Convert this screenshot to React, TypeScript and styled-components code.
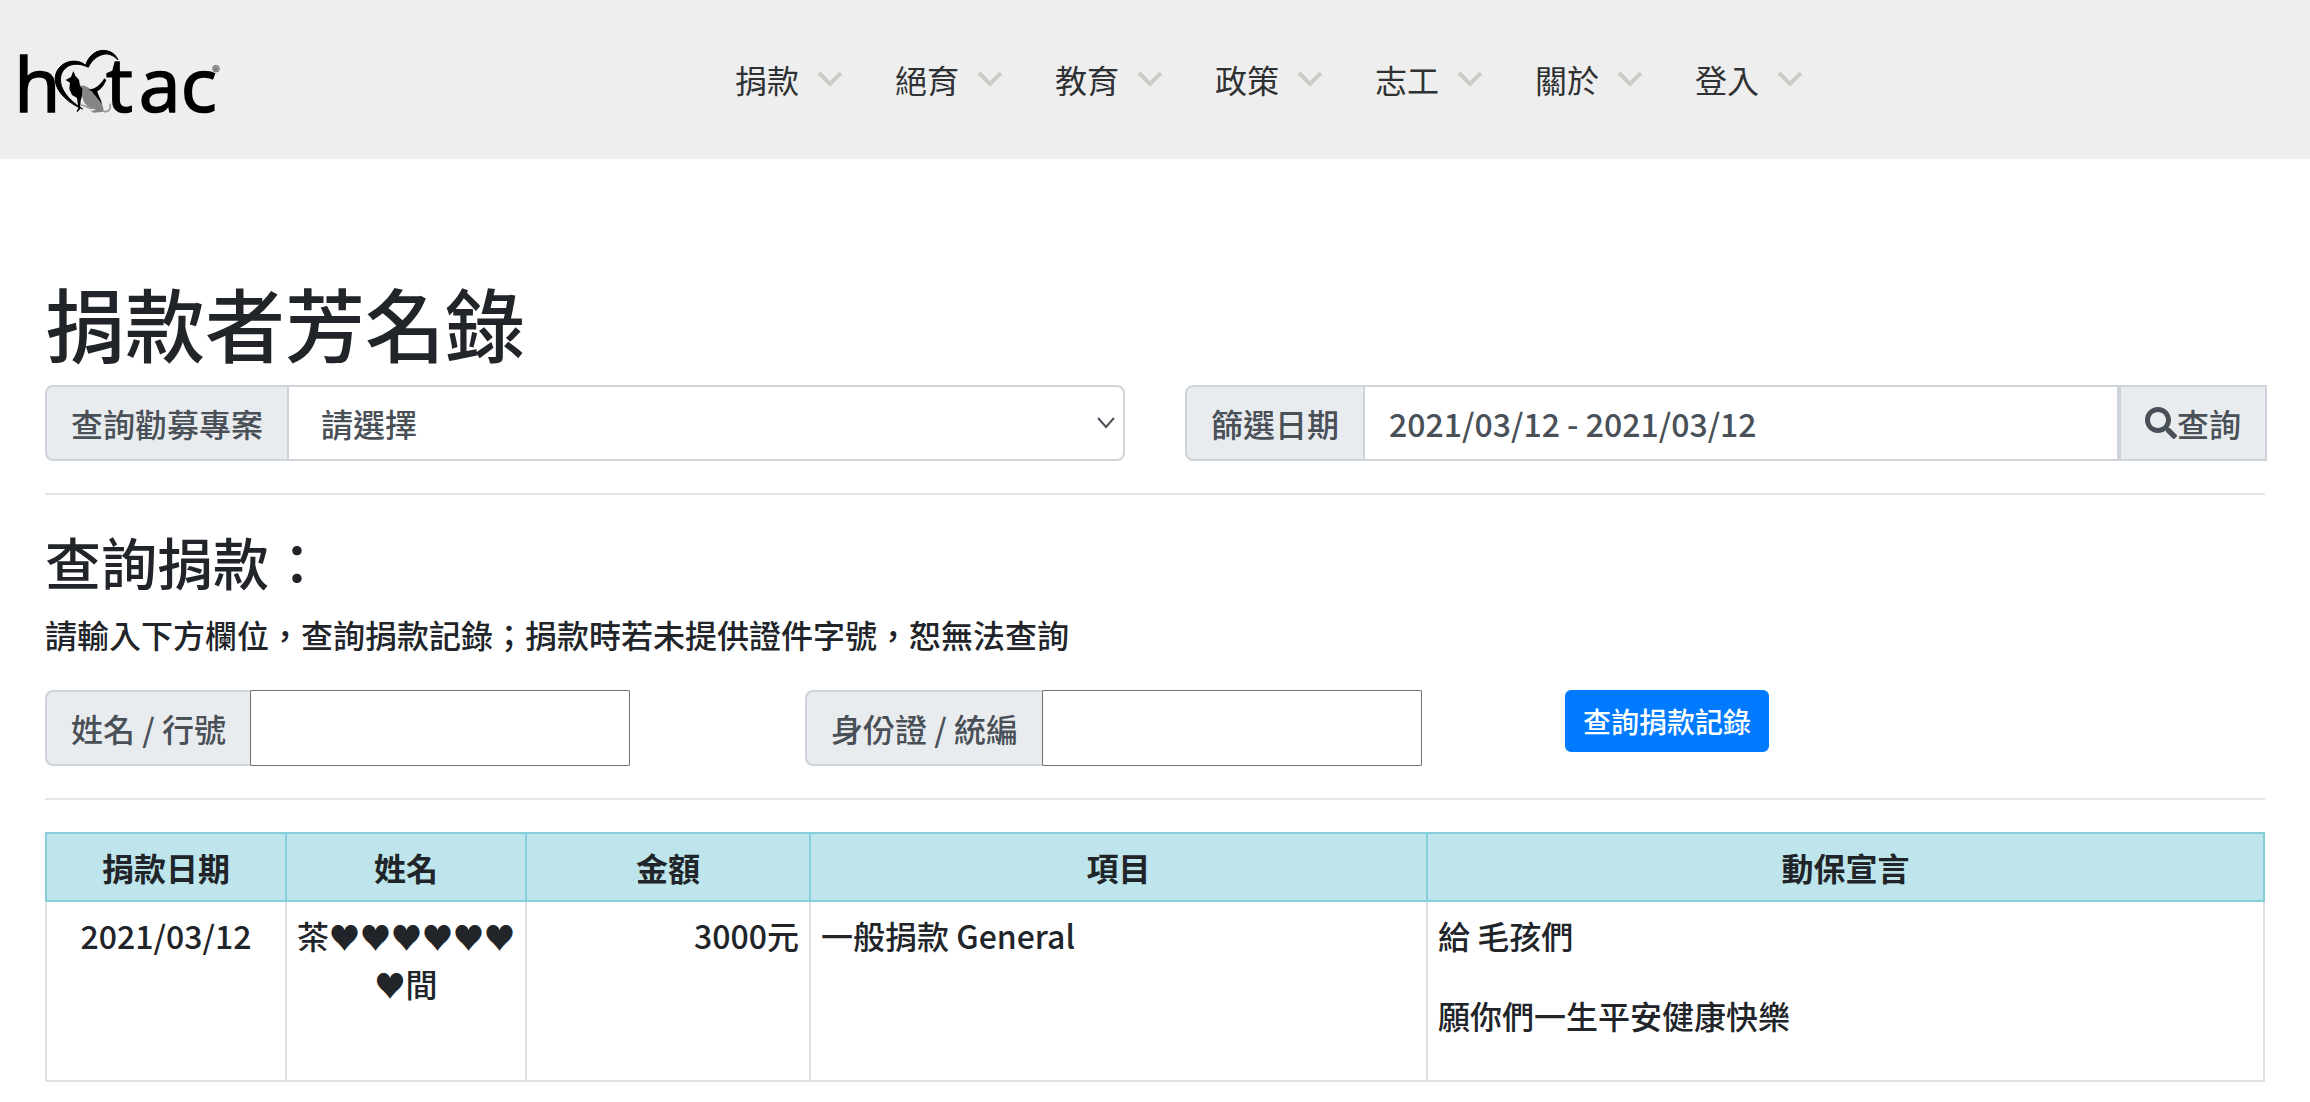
import React, { useState } from "react";
import styled, { createGlobalStyle } from "styled-components";
import { FaSearch } from "react-icons/fa";

const GlobalStyle = createGlobalStyle`
  *, *::before, *::after { box-sizing: border-box; }
  body {
    margin: 0;
    background: #fff;
    color: #212529;
    font-family: "Noto Sans CJK TC", sans-serif;
    font-size: 32px;
    line-height: 48px;
    font-weight: 500;
  }
  input, select, button { font: inherit; color: inherit; margin: 0; }
`;

const Header = styled.header`
  display: flex;
  align-items: center;
  gap: 8px;
  padding: 48px 0 44px 20px;
  background: #eee;
`;

const LogoLink = styled.a`
  display: flex;
  flex: none;
  svg { display: block; overflow: visible; }
`;

const Nav = styled.nav`
  display: flex;
  flex: 1;
  justify-content: center;
  gap: 52px;
  padding-bottom: 6px;
`;

const NavLink = styled.a`
  display: flex;
  align-items: center;
  gap: 18px;
  color: #2f3133;
  font-weight: 400;
  text-decoration: none;
`;

const Main = styled.main`
  padding: 114px 45px 20px;
`;

const Title = styled.h1`
  margin: 0 0 16px;
  font-size: 80px;
  line-height: 96px;
  font-weight: 500;
`;

const Subtitle = styled.h3`
  margin: 0 0 16px;
  font-size: 56px;
  line-height: 67px;
  font-weight: 500;
`;

const Hint = styled.p`
  margin: 0 0 32px;
`;

const Rule = styled.hr`
  margin: 32px 0;
  border: 0;
  border-top: 2px solid #e5e5e5;
`;

const Columns = styled.div<{ $count: number }>`
  display: grid;
  grid-template-columns: repeat(${(p) => p.$count}, minmax(0, 1fr));
  column-gap: 60px;
  align-items: start;
`;

const Group = styled.div`
  display: flex;
  height: 76px;
`;

const Addon = styled.label`
  display: flex;
  align-items: center;
  flex: none;
  padding: 0 24px;
  border: 2px solid #ced4da;
  border-radius: 8px 0 0 8px;
  background: #e9ecef;
  color: #495057;
  white-space: nowrap;
`;

const SelectBox = styled.div`
  display: grid;
  flex: 1;
  align-items: center;
  margin-left: -2px;
  svg {
    grid-area: 1 / 1;
    justify-self: end;
    margin-right: 9px;
    pointer-events: none;
  }
`;

const Select = styled.select`
  grid-area: 1 / 1;
  width: 100%;
  height: 76px;
  padding: 0 32px;
  appearance: none;
  border: 2px solid #ced4da;
  border-radius: 0 8px 8px 0;
  background: #fff;
  color: #495057;
`;

const DateInput = styled.input`
  flex: 1;
  min-width: 0;
  margin-left: -2px;
  padding: 0 24px;
  border: 2px solid #ced4da;
  border-radius: 0;
  background: #fff;
  color: #495057;
`;

const SearchButton = styled.button`
  display: flex;
  align-items: center;
  flex: none;
  margin-right: -2px;
  padding: 0 24px;
  border: 2px solid #ced4da;
  background: #e9ecef;
  color: #495057;
`;

const PlainInput = styled.input`
  width: 380px;
  min-width: 0;
  margin-left: -2px;
  padding: 2px 4px;
  border: 1px solid #707070;
  border-radius: 1px;
  background: #fff;
`;

const PrimaryButton = styled.button`
  justify-self: start;
  padding: 8px 16px;
  border: 2px solid #007bff;
  border-radius: 6px;
  background: #007bff;
  color: #fff;
  font-size: 28px;
  line-height: 42px;
`;

const Table = styled.table`
  width: 100%;
  table-layout: fixed;
  border-collapse: collapse;
`;

const Col = styled.col<{ $width: string }>`
  width: ${(p) => p.$width};
`;

const HeadCell = styled.th`
  padding: 9px 10px;
  border: 2px solid #86cfda;
  background: #bee5eb;
  font-weight: 700;
  text-align: center;
`;

const Cell = styled.td<{ $align?: string }>`
  padding: 9px 10px;
  border: 2px solid #dee2e6;
  text-align: ${(p) => p.$align ?? "left"};
  vertical-align: top;
  p { margin: 0 0 32px; }
`;

const NameCell = styled(Cell)`
  word-break: break-all;
`;

const Hearts = styled.span`
  font-size: 31px;
  line-height: 1;
`;

const Logo = () => (
  <svg width="200" height="67" viewBox="60 55 600 201" role="img" aria-label="hotac">
    <g fontFamily="'Open Sans', sans-serif" fontSize="226" fill="#000" stroke="#000" strokeWidth="5">
      <text x="43" y="247">h</text>
      <text x="318" y="247">t</text>
      <text x="416" y="247">a</text>
      <text x="542" y="247">c</text>
    </g>
    <path d="M257 107C238 90 205 90 184 108C160 129 160 160 180 188C196 210 222 228 248 238C221 221 200 201 188 178C176 152 180 125 202 111C220 100 243 102 265 113C276 88 300 72 322 73C335 75 346 82 354 91C346 72 330 62 308 62C284 63 264 82 257 107Z" fill="#000" stroke="#000" strokeWidth="3" />
    <path d="M220 124L226 138L237 150L240 168L249 176L246 199L242 214L240 239L231 248L230 243L235 236L231 205L216 196L208 178L210 159L197 151L213 142Z" fill="#000" />
    <path d="M240 168C254 166 267 172 276 184C291 198 304 213 309 232L312 246L280 249L273 244L289 240L267 235L252 218L246 199L248 178Z" fill="#858585" />
    <path d="M243 226C255 228 264 233 275 238M312 246C329 246 333 238 330 222" fill="none" stroke="#999" strokeWidth="5" />
    <path d="M265 179C282 181 300 168 313 146L319 151C312 168 303 179 292 185C294 198 304 208 306 226C300 210 285 200 277 186Z" fill="#000" />
    <circle cx="648" cy="117" r="10" fill="#aaa" stroke="#777" strokeWidth="3" />
    <text x="642" y="123" fontFamily="'Open Sans', sans-serif" fontSize="17" fill="#444">R</text>
  </svg>
);

const NavChevron = () => (
  <svg width="26" height="16" viewBox="0 0 26 16" aria-hidden="true">
    <path d="M2 2L13 13L24 2" fill="none" stroke="#ccccc6" strokeWidth="4" />
  </svg>
);

const SelectChevron = () => (
  <svg width="20" height="12" viewBox="0 0 20 12" aria-hidden="true">
    <path d="M2 1L10 10L18 1" fill="none" stroke="#495057" strokeWidth="2" />
  </svg>
);

const menu = ["捐款", "絕育", "教育", "政策", "志工", "關於", "登入"];

const columns = [
  { label: "捐款日期", width: "240px" },
  { label: "姓名", width: "240px" },
  { label: "金額", width: "284px" },
  { label: "項目", width: "617px" },
  { label: "動保宣言", width: "auto" },
];

const donations = [
  {
    date: "2021/03/12",
    name: "茶♥♥♥♥♥♥♥間",
    amount: "3000元",
    item: "一般捐款 General",
    words: ["給 毛孩們", "願你們一生平安健康快樂"],
  },
];

const DonorName = ({ name }: { name: string }) => (
  <>
    {name.split(/(♥+)/).map((part, i) =>
      part.startsWith("♥") ? <Hearts key={i}>{part}</Hearts> : part
    )}
  </>
);

export default function App() {
  const [dates, setDates] = useState("2021/03/12 - 2021/03/12");

  return (
    <>
      <GlobalStyle />
      <Header>
        <LogoLink href="#">
          <Logo />
        </LogoLink>
        <Nav>
          {menu.map((label) => (
            <NavLink href="#" key={label}>
              {label}
              <NavChevron />
            </NavLink>
          ))}
        </Nav>
      </Header>
      <Main>
        <Title>捐款者芳名錄</Title>
        <Columns $count={2}>
          <Group>
            <Addon htmlFor="project">查詢勸募專案</Addon>
            <SelectBox>
              <Select id="project">
                <option>請選擇</option>
              </Select>
              <SelectChevron />
            </SelectBox>
          </Group>
          <Group>
            <Addon htmlFor="dates">篩選日期</Addon>
            <DateInput id="dates" type="text" value={dates} onChange={(e) => setDates(e.target.value)} />
            <SearchButton type="button">
              <FaSearch aria-hidden="true" />
              查詢
            </SearchButton>
          </Group>
        </Columns>
        <Rule />
        <Subtitle>查詢捐款：</Subtitle>
        <Hint>請輸入下方欄位，查詢捐款記錄；捐款時若未提供證件字號，恕無法查詢</Hint>
        <Columns $count={3}>
          <Group>
            <Addon htmlFor="donor">姓名 / 行號</Addon>
            <PlainInput id="donor" type="text" />
          </Group>
          <Group>
            <Addon htmlFor="idno">身份證 / 統編</Addon>
            <PlainInput id="idno" type="text" />
          </Group>
          <PrimaryButton type="button">查詢捐款記錄</PrimaryButton>
        </Columns>
        <Rule />
        <Table>
          <colgroup>
            {columns.map((c) => (
              <Col key={c.label} $width={c.width} />
            ))}
          </colgroup>
          <thead>
            <tr>
              {columns.map((c) => (
                <HeadCell scope="col" key={c.label}>{c.label}</HeadCell>
              ))}
            </tr>
          </thead>
          <tbody>
            {donations.map((d) => (
              <tr key={d.date + d.name}>
                <Cell $align="center">{d.date}</Cell>
                <NameCell $align="center">
                  <DonorName name={d.name} />
                </NameCell>
                <Cell $align="right">{d.amount}</Cell>
                <Cell>{d.item}</Cell>
                <Cell>
                  {d.words.map((line) => (
                    <p key={line}>{line}</p>
                  ))}
                </Cell>
              </tr>
            ))}
          </tbody>
        </Table>
      </Main>
    </>
  );
}
